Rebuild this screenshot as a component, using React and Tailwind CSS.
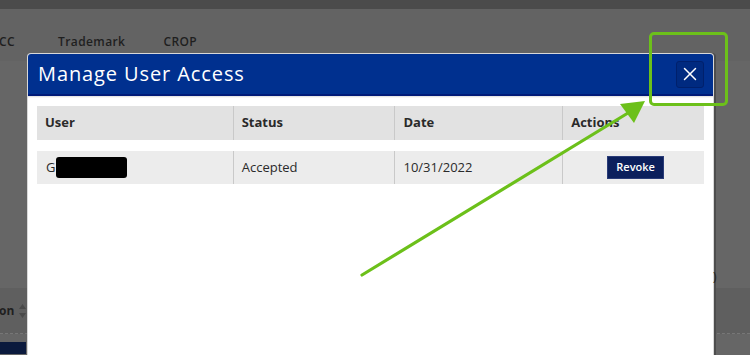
import { X } from 'lucide-react';

const cols = [
  { label: 'User', w: 'w-[197px]' },
  { label: 'Status', w: 'w-[162px]' },
  { label: 'Date', w: 'w-[168px]' },
  { label: 'Actions', w: 'w-[141px]' },
];

function Cell({ w, last, children, className = '' }) {
  return (
    <div className={`${w} flex items-center px-2 ${last ? '' : 'border-r border-[#c9c9c9]'} ${className}`}>
      {children}
    </div>
  );
}

export default function App() {
  return (
    <div className="relative h-[355px] w-[750px] overflow-hidden bg-[#666666] font-['Open_Sans',sans-serif]">
      {/* dimmed page behind the modal */}
      <div className="h-[9px] bg-[#4b4b4b]" />
      <div className="flex h-[52px] items-start bg-[#636363] pt-[24px] text-[12px] font-semibold tracking-[0.4px] text-[#1f1f1f]">
        <span className="-ml-[1px]">CC</span>
        <span className="ml-[43px]">Trademark</span>
        <span className="ml-[38px]">CROP</span>
      </div>
      <div className="h-[227px]" />
      <div className="flex h-[46px] items-center border-b border-dashed border-[#777] bg-[#5f5f5f] text-[12px] font-bold text-[#1f1f1f]">
        <span className="-ml-[1px]">on</span>
        <svg className="ml-[5px]" width="7" height="16" viewBox="0 0 7 16">
          <polygon points="3.5,1 7,6 0,6" fill="#4a4a4a" />
          <polygon points="0,10 7,10 3.5,15" fill="#4a4a4a" />
        </svg>
      </div>
      <div className="mt-[8px] h-[12px] w-[26px] bg-[#0b1a3d]" />

      {/* modal */}
      <div className="absolute left-[28px] top-[54px] h-[320px] w-[685px] rounded-t-[3px] bg-white shadow-[0_0_0_1px_#d8d8d8,2px_0_0_1px_#4d4d4d]">
        <div className="flex h-[42px] items-center justify-between rounded-t-[3px] border-b-2 border-[#001a78] bg-[#00308f] pl-[10px] pr-[9px]">
          <h2 className="text-[20px] font-normal tracking-[0.9px] text-white">Manage User Access</h2>
          <button className="flex h-[27px] w-[28px] items-center justify-center rounded-[3px] border border-[#00206c] bg-[#002a80] text-white">
            <X size={22} strokeWidth={1.6} />
          </button>
        </div>
        <div className="h-[2px] bg-gradient-to-b from-[#dcdcdc] to-white" />
        <div className="px-[9px] pt-[8px] text-[13px] text-[#2a2a2a]">
          <div className="flex h-[34px] bg-[#e2e2e2] font-bold">
            {cols.map((c, i) => (
              <Cell key={c.label} w={c.w} last={i === cols.length - 1}>
                {c.label}
              </Cell>
            ))}
          </div>
          <div className="mt-[11px] flex h-[33px] bg-[#ececec]">
            <Cell w={cols[0].w} className="px-[9px]">
              G
              <span className="ml-[1px] inline-block h-[21px] w-[71px] rounded-[3px] bg-black" />
            </Cell>
            <Cell w={cols[1].w}>Accepted</Cell>
            <Cell w={cols[2].w}>10/31/2022</Cell>
            <Cell w={cols[3].w} last className="justify-center pr-[4px]">
              <button className="h-[23px] w-[57px] border border-[#2a3c78] bg-[#0b1f5c] text-[11px] font-semibold text-white">
                Revoke
              </button>
            </Cell>
          </div>
        </div>
      </div>

      {/* right edge details */}
      <span className="absolute left-[713px] top-[268px] text-[12px] text-[#222]">)</span>

      {/* annotation */}
      <div className="absolute left-[649px] top-[32px] h-[74px] w-[79px] rounded-[5px] border-[3px] border-[#6cc01a]" />
      <svg className="absolute left-0 top-0" width="750" height="355" viewBox="0 0 750 355">
        <path d="M362 275 L628 113" stroke="#6cc01a" strokeWidth="3.2" strokeLinecap="round" />
        <polygon points="645,101 620,104 634,123" fill="#6cc01a" />
      </svg>
    </div>
  );
}
